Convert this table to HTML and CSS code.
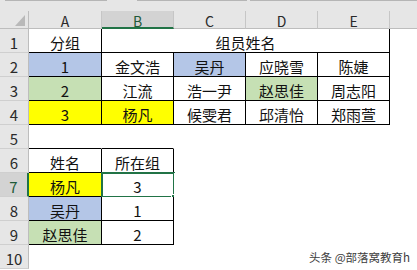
FILE: index.html
```html
<!DOCTYPE html>
<html lang="zh">
<head>
<meta charset="utf-8">
<link rel="stylesheet" href="styles.css">
</head>
<body>
<div class="sheet">
  <div class="strip"><span class="seg s1"></span><span class="seg s2"></span><span class="seg s3"></span></div>

  <div class="corner"><svg width="29" height="18" viewBox="0 0 29 18"><polygon points="15,15 25,15 25,4" fill="#b9b9b9"/></svg></div>
  <div class="ch">A</div>
  <div class="ch sel">B</div>
  <div class="ch">C</div>
  <div class="ch">D</div>
  <div class="ch">E</div>
  <div class="ch rest"></div>

  <div class="rh">1</div>
  <div class="c br bb">分组</div>
  <div class="c br bb span4">组员姓名</div>
  <div class="c"></div>

  <div class="rh">2</div>
  <div class="c br bb blue">1</div>
  <div class="c br bb">金文浩</div>
  <div class="c br bb blue">吴丹</div>
  <div class="c br bb">应晓雪</div>
  <div class="c br bb">陈婕</div>
  <div class="c"></div>

  <div class="rh">3</div>
  <div class="c br bb green">2</div>
  <div class="c br bb">江流</div>
  <div class="c br bb">浩一尹</div>
  <div class="c br bb green">赵思佳</div>
  <div class="c br bb">周志阳</div>
  <div class="c"></div>

  <div class="rh">4</div>
  <div class="c br bb yellow">3</div>
  <div class="c br bb yellow">杨凡</div>
  <div class="c br bb">候雯君</div>
  <div class="c br bb">邱清怡</div>
  <div class="c br bb">郑雨萱</div>
  <div class="c"></div>

  <div class="rh">5</div>
  <div class="c bb"></div>
  <div class="c bb"></div>
  <div class="c"></div>
  <div class="c"></div>
  <div class="c"></div>
  <div class="c"></div>

  <div class="rh">6</div>
  <div class="c br bb">姓名</div>
  <div class="c br bb">所在组</div>
  <div class="c"></div>
  <div class="c"></div>
  <div class="c"></div>
  <div class="c"></div>

  <div class="rh selrow">7</div>
  <div class="c br bb yellow">杨凡</div>
  <div class="c br bb active">3<span class="cursor"><span class="handle"></span></span></div>
  <div class="c"></div>
  <div class="c"></div>
  <div class="c"></div>
  <div class="c"></div>

  <div class="rh">8</div>
  <div class="c br bb blue">吴丹</div>
  <div class="c br bb">1</div>
  <div class="c"></div>
  <div class="c"></div>
  <div class="c"></div>
  <div class="c"></div>

  <div class="rh">9</div>
  <div class="c br bb green">赵思佳</div>
  <div class="c br bb">2</div>
  <div class="c"></div>
  <div class="c"></div>
  <div class="c"></div>
  <div class="c"></div>

  <div class="rh">10</div>
  <div class="c"></div>
  <div class="c"></div>
  <div class="c"></div>
  <div class="c"></div>
  <div class="c"></div>
  <div class="c"></div>

  <div class="watermark">头条 @部落窝教育h</div>
</div>
</body>
</html>
```

FILE: styles.css
```css
html, body {
  margin: 0;
  padding: 0;
  background: #fff;
}
body {
  width: 417px;
  height: 270px;
  overflow: hidden;
  font-family: "Noto Sans CJK SC", "Noto Sans", sans-serif;
}
.sheet {
  position: relative;
  display: grid;
  grid-template-columns: 29px 73px 72px 72px 72px 72px 1fr;
  grid-template-rows: 11px 18px repeat(10, 24px);
  width: 417px;
  height: 270px;
}
.sheet > div {
  box-sizing: border-box;
}
.strip {
  grid-column: 1 / -1;
  background: #e6e6e6;
  display: flex;
  align-items: flex-start;
}
.seg {
  height: 1px;
  background: #b5b5b5;
}
.s1 { margin-left: 5px; width: 102px; }
.s2 { margin-left: 30px; width: 110px; }
.s3 { margin-left: 3px; flex: 1; }

.corner {
  background: #e6e6e6;
  border-right: 1px solid #bdbdbd;
  border-bottom: 1px solid #bdbdbd;
}
.corner svg { display: block; }

.ch {
  background: #e6e6e6;
  border-right: 1px solid #c6c6c6;
  border-bottom: 1px solid #bdbdbd;
  display: flex;
  justify-content: center;
  align-items: center;
  padding-top: 3px;
  font-size: 14px;
  line-height: 1;
  color: #2a2a2a;
}
.ch.sel {
  background: #d3d3d3;
  border-bottom: 2px solid #217346;
  color: #1f5a38;
}
.ch.rest {
  border-right: none;
}

.rh {
  background: #e6e6e6;
  border-right: 1px solid #bdbdbd;
  border-bottom: 1px solid #cfcfcf;
  display: flex;
  justify-content: center;
  align-items: flex-end;
  padding-bottom: 2px;
  font-size: 15px;
  line-height: 1;
  color: #2a2a2a;
}
.rh.selrow {
  background: #d3d3d3;
  border-right: 2px solid #217346;
  color: #1f5a38;
}

.c {
  position: relative;
  background: #fff;
  border-right: 1px solid #fff;
  border-bottom: 1px solid #fff;
  display: flex;
  justify-content: center;
  align-items: center;
  padding-top: 3px;
  font-size: 15px;
  line-height: 1;
  color: #111;
}
.c.br { border-right-color: #000; }
.c.bb { border-bottom-color: #000; }
.span4 { grid-column: span 4; }
.blue { background: #b4c6e7; }
.green { background: #c6e0b4; }
.yellow { background: #ffff00; }

.cursor {
  position: absolute;
  left: -1px;
  top: -1px;
  right: -2px;
  bottom: -2px;
  border: 2px solid #217346;
}
.handle {
  position: absolute;
  right: -4px;
  bottom: -4px;
  width: 5px;
  height: 5px;
  background: #217346;
  box-shadow: 0 0 0 1px #fff;
}

.watermark {
  position: absolute;
  right: 7px;
  bottom: 7px;
  font-size: 11.5px;
  line-height: 1;
  color: #3c3c3c;
  white-space: nowrap;
}
```
